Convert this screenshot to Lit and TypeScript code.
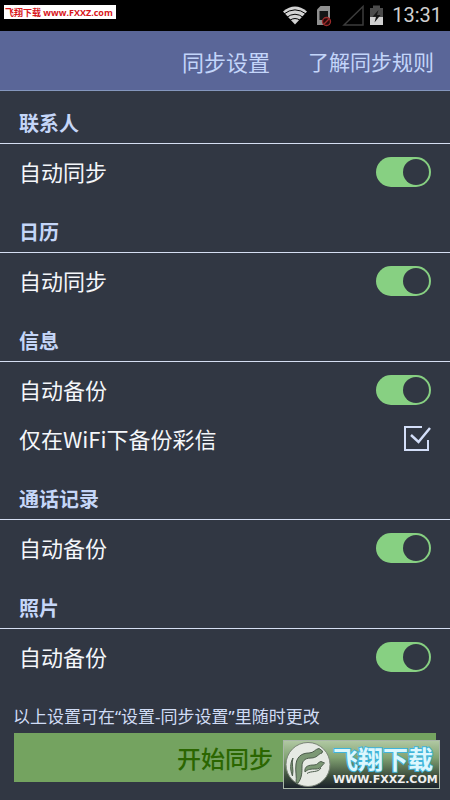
import { LitElement, html, css } from "lit";
import { customElement, property } from "lit/decorators.js";

interface Option {
  id: string;
  label: string;
  kind: "switch" | "tick";
}

interface Section {
  title: string;
  options: Option[];
}

const SECTIONS: Section[] = [
  { title: "联系人", options: [{ id: "contacts", label: "自动同步", kind: "switch" }] },
  { title: "日历", options: [{ id: "calendar", label: "自动同步", kind: "switch" }] },
  {
    title: "信息",
    options: [
      { id: "messages", label: "自动备份", kind: "switch" },
      { id: "mms-wifi", label: "仅在WiFi下备份彩信", kind: "tick" },
    ],
  },
  { title: "通话记录", options: [{ id: "calls", label: "自动备份", kind: "switch" }] },
  { title: "照片", options: [{ id: "photos", label: "自动备份", kind: "switch" }] },
];

@customElement("status-bar")
class StatusBar extends LitElement {
  static styles = css`
    :host {
      display: flex;
      justify-content: space-between;
      height: 31px;
      padding: 0 8px 0 4px;
      background: #000;
    }
    .site {
      align-self: flex-start;
      margin-top: 5px;
      height: 14px;
      padding: 0 3px 0 1px;
      background: #fff;
      color: #d8161b;
      font: bold 9px/15px "Open Sans", "Noto Sans CJK SC", sans-serif;
      white-space: pre;
    }
    .right {
      display: flex;
      align-items: center;
    }
    .icons {
      display: block;
      margin-right: 8px;
    }
    .clock {
      color: #d0d0d0;
      font: 20px/31px Roboto, sans-serif;
    }
  `;

  render() {
    return html`
      <span class="site">飞翔下载 www.FXXZ.com</span>
      <div class="right">
        <svg class="icons" width="102" height="31" viewBox="284 0 102 31">
          <path d="M285 11.500 Q297 1.500 309 11.500 L297 24.500Z" fill="#d2d2d2" />
          <path
            d="M285.500 14.200 Q297 5.500 308.500 14.200 M288.500 17.500 Q297 11 305.500 17.500 M291.500 20.500 Q297 16.500 302.500 20.500"
            fill="none"
            stroke="#000"
            stroke-width="1"
          />
          <path d="M319 9.500 L322.500 6 H332 V25 H319Z" fill="#8f8f8f" />
          <path d="M321.500 11 H330 V20 H321.500Z" fill="#141414" />
          <circle cx="328.500" cy="21.500" r="4" fill="#260808" stroke="#9c2a2a" stroke-width="1.300" />
          <path d="M325.800 24.200 L331.200 18.800" stroke="#9c2a2a" stroke-width="1.300" />
          <path d="M346 25 L365 6.500 V25Z" fill="none" stroke="#3c3c3c" stroke-width="1.500" />
          <path d="M375 5.500 H382 V8 H385 V17 H372 V8 H375Z" fill="#4b4b4b" />
          <path d="M372 17 H385 V25 H372Z" fill="#d0d0d0" />
          <path d="M380.500 10 L374.500 16.800 H378 L376.500 22.500 L382.500 15 H379Z" fill="#161616" />
        </svg>
        <span class="clock">13:31</span>
      </div>
    `;
  }
}

@customElement("option-row")
class OptionRow extends LitElement {
  @property({ attribute: false }) option!: Option;

  static styles = css`
    :host {
      display: block;
    }
    .row {
      display: flex;
      align-items: center;
      justify-content: space-between;
      height: 49px;
      padding: 0 19px;
      color: #f4f6fa;
      font-size: 22px;
      line-height: 30px;
    }
    label {
      padding-bottom: 2px;
    }
    input {
      appearance: none;
      margin: 0;
    }
    .switch {
      display: flex;
      align-items: center;
      box-sizing: border-box;
      width: 55px;
      height: 30px;
      padding: 0 2px;
      border-radius: 15px;
      background: #69727f;
    }
    .switch::before {
      content: "";
      width: 26px;
      height: 26px;
      border-radius: 50%;
      background: #313743;
    }
    .switch:checked {
      justify-content: flex-end;
      background: #87d082;
    }
    .tick {
      display: grid;
    }
    .tick input,
    .tick svg {
      grid-area: 1 / 1;
      width: 28px;
      height: 26px;
    }
    .tick svg {
      pointer-events: none;
    }
    .tick input:not(:checked) + svg .mark {
      display: none;
    }
  `;

  render() {
    const { id, label, kind } = this.option;
    const control =
      kind === "switch"
        ? html`<input class="switch" id=${id} type="checkbox" role="switch" checked />`
        : html`<span class="tick">
            <input id=${id} type="checkbox" checked />
            <svg viewBox="0 0 28 26" fill="none" stroke="#d3def8">
              <path d="M19 1 H2 V24 H25 V14" stroke-width="2" />
              <path class="mark" d="M8 9 L15.500 16 L27 2" stroke-width="2.500" />
            </svg>
          </span>`;
    return html`<div class="row"><label for=${id}>${label}</label>${control}</div>`;
  }
}

@customElement("site-badge")
class SiteBadge extends LitElement {
  static styles = css`
    :host {
      display: flex;
      align-items: center;
      box-sizing: border-box;
      width: 157px;
      height: 49px;
      padding-left: 1px;
      border: 1px solid #a9b7a8;
      background: linear-gradient(#b0c8a2 0%, #82a373 35%, #3c4c3c 75%, #1b222b 100%);
    }
    .logo {
      flex: none;
    }
    .words {
      display: flex;
      flex-direction: column;
      margin-left: 2px;
      white-space: nowrap;
    }
    .name {
      color: #dcf7fd;
      font: bold 25px/30px "Noto Sans CJK SC", sans-serif;
      -webkit-text-stroke: 2px #3fb4da;
      paint-order: stroke fill;
    }
    .url {
      color: #f0f0f0;
      font: bold 11px/14px "DejaVu Sans", sans-serif;
    }
  `;

  render() {
    return html`
      <svg class="logo" width="46" height="47" viewBox="0 0 46 47">
        <circle cx="23" cy="23.500" r="22" fill="#e6eae4" stroke="#7b8578" />
        <g fill="#7c9875" stroke="#4c5c4c" stroke-width="1">
          <path
            d="M11 42 C12 36 10 30 11 23 C12 14 19 12 24 12 C29 12 30 8 34 7.500 L37.500 10 L37 12 C33 13 32 17 26 17 C19 17 17 21 17 25 C17 31 17 37 13 42Z"
          />
          <path d="M20 31 C19 25 24 24 29 24 C33 24 33 21 36 20.500 L39.500 22 C37 24 36 28 31 28 C26 28 23 28 20 31Z" />
          <path d="M22 32.500 C26 29.500 33 32 36 27" fill="none" />
          <path d="M8 17 C6 22 9 28 7.500 35 C5 29 5 22 8 17Z" />
        </g>
      </svg>
      <span class="words">
        <span class="name">飞翔下载</span>
        <span class="url">WWW.FXXZ.COM</span>
      </span>
    `;
  }
}

@customElement("app-root")
class AppRoot extends LitElement {
  static styles = css`
    :host {
      display: flex;
      flex-direction: column;
      position: relative;
      min-height: 100vh;
      background: #313743;
      font-family: "Noto Sans CJK SC", sans-serif;
    }
    .tabs {
      display: flex;
      justify-content: flex-end;
      align-items: center;
      gap: 38px;
      box-sizing: border-box;
      height: 60px;
      padding-right: 16px;
      border-bottom: 1px solid #8496bd;
      background: #5a6698;
    }
    .tabs a {
      color: #c3d5fa;
      font-size: 21px;
      line-height: 30px;
      text-decoration: none;
    }
    .tabs .current {
      font-size: 22px;
    }
    h2 {
      box-sizing: border-box;
      height: 53px;
      margin: 0;
      padding: 17px 19px 0;
      border-bottom: 1px solid #d5def2;
      color: #c5d6f8;
      font-size: 20px;
      font-weight: bold;
      line-height: 30px;
    }
    .options {
      padding: 3px 0 4px;
    }
    .note {
      margin: 17px 13px 1px;
      color: #d0dcf5;
      font-family: "Noto Sans", "Noto Sans CJK SC", sans-serif;
      font-size: 17px;
      line-height: 30px;
    }
    .start {
      height: 49px;
      margin: 0 14px 18px;
      padding: 0;
      border: 0;
      background: #74a360;
      color: #2b6600;
      font: 500 24px/49px "Noto Sans CJK SC", sans-serif;
    }
    .badge {
      position: absolute;
      right: 10px;
      bottom: 11px;
    }
  `;

  render() {
    return html`
      <status-bar></status-bar>
      <nav class="tabs">
        <a class="current" href="#settings">同步设置</a>
        <a href="#rules">了解同步规则</a>
      </nav>
      <main>
        ${SECTIONS.map(
          (section) => html`
            <section>
              <h2>${section.title}</h2>
              <div class="options">
                ${section.options.map((option) => html`<option-row .option=${option}></option-row>`)}
              </div>
            </section>
          `,
        )}
      </main>
      <p class="note">以上设置可在“设置-同步设置”里随时更改</p>
      <button class="start">开始同步</button>
      <site-badge class="badge"></site-badge>
    `;
  }
}
